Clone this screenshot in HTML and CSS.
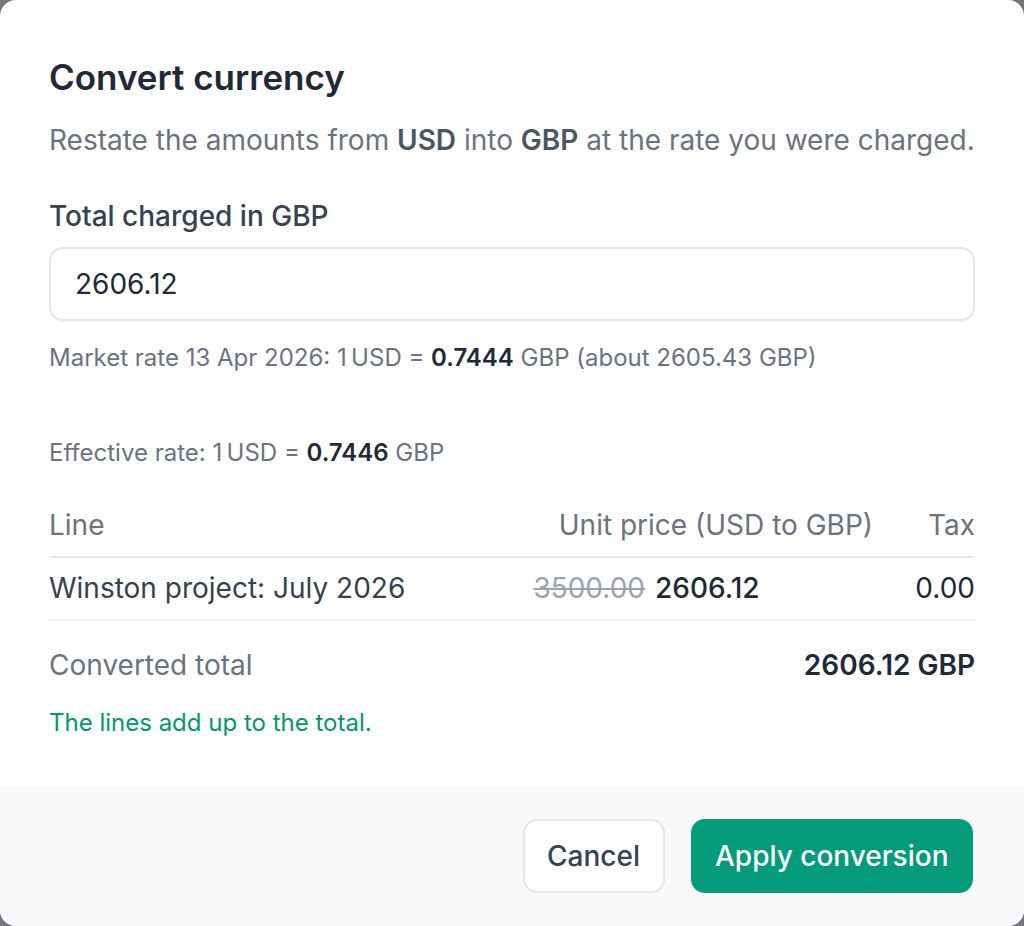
FILE: index.html
```html
<!DOCTYPE html>
<html lang="en">
<head>
<meta charset="utf-8">
<title>Convert currency</title>
<link rel="stylesheet" href="styles.css">
</head>
<body>
<div class="dialog" role="dialog" aria-labelledby="dlg-title">
  <div class="body">
    <h2 class="title" id="dlg-title">Convert currency</h2>
    <p class="desc">Restate the amounts from <strong>USD</strong> into <strong>GBP</strong> at the rate you were charged.</p>

    <label class="label" for="total">Total charged in GBP</label>
    <div class="input"><span class="input-text" id="total">2606.12</span></div>
    <p class="hint market">Market rate 13 Apr 2026: 1&#8201;USD = <strong>0.7444</strong> GBP (about 2605.43 GBP)</p>

    <p class="hint effective">Effective rate: 1&#8201;USD = <strong>0.7446</strong> GBP</p>

    <div class="table">
      <div class="tr th">
        <div class="c-line">Line</div>
        <div class="c-unit">Unit price (USD to GBP)</div>
        <div class="c-tax">Tax</div>
      </div>
      <div class="tr td">
        <div class="c-line">Winston project: July 2026</div>
        <div class="c-unit"><s class="old">3500.00</s><span class="new">2606.12</span></div>
        <div class="c-tax">0.00</div>
      </div>
    </div>

    <div class="total-row">
      <span class="total-label">Converted total</span>
      <span class="total-value">2606.12 GBP</span>
    </div>
    <p class="ok">The lines add up to the total.</p>
  </div>
  <div class="footer">
    <button class="btn btn-cancel" type="button">Cancel</button>
    <button class="btn btn-apply" type="button">Apply conversion</button>
  </div>
</div>
</body>
</html>
```
FILE: styles.css
```css
* { box-sizing: border-box; }
html, body {
  margin: 0;
  padding: 0;
  height: 100%;
}
body {
  background: #74777f;
  font-family: Inter, "Noto Sans", "Liberation Sans", sans-serif;
  color: #1f2937;
}
.dialog {
  height: 926px;
  width: 1024px;
  background: #ffffff;
  border-radius: 16px;
  overflow: hidden;
  display: flex;
  flex-direction: column;
}
.body {
  padding: 52.5px 49px 46px;
}
.title {
  margin: 0;
  font-size: 35px;
  line-height: 49px;
  font-weight: 600;
  color: #1f2937;
}
.desc {
  margin: 17px 0 0;
  font-size: 28px;
  line-height: 42px;
  color: #6b7280;
}
.desc strong {
  font-weight: 600;
  color: #4b5563;
}
.label {
  display: block;
  margin-top: 34px;
  font-size: 28px;
  line-height: 42px;
  font-weight: 500;
  color: #374151;
}
.input {
  margin-top: 10.5px;
  height: 73.5px;
  border: 2px solid #e5e7eb;
  border-radius: 14px;
  padding: 0 24px;
  display: flex;
  align-items: center;
  box-shadow: 0 1px 2px rgba(0,0,0,0.04);
}
.input-text {
  font-size: 28px;
  line-height: 42px;
  color: #1f2937;
}
.hint {
  margin: 0;
  font-size: 24px;
  line-height: 35px;
  color: #6b7280;
}
.hint strong {
  font-weight: 600;
  color: #1f2937;
}
.market { margin-top: 19.5px; }
.effective { margin-top: 60px; }
.table {
  margin-top: 34px;
}
.tr {
  display: grid;
  grid-template-columns: 1fr 340px 102px;
  font-size: 28px;
  line-height: 42px;
}
.th {
  color: #6b7280;
  padding-bottom: 9.5px;
  border-bottom: 2px solid #e5e7eb;
}
.td {
  color: #374151;
  padding: 9.5px 0 9.5px;
  border-bottom: 2px solid #f0f1f3;
}
.c-unit, .c-tax { text-align: right; }
.td .c-unit {
  display: flex;
  justify-content: flex-end;
  align-items: baseline;
}
.old {
  color: #9ca3af;
  margin-right: 10px;
}
.new {
  display: inline-block;
  width: 218px;
  text-align: left;
  color: #1f2937;
  font-weight: 500;
}
.td .c-tax { color: #1f2937; }
.total-row {
  margin-top: 23.4px;
  display: flex;
  justify-content: space-between;
  font-size: 28px;
  line-height: 42px;
}
.total-label { color: #6b7280; }
.total-value { color: #1f2937; font-weight: 600; }
.ok {
  margin: 19.5px 0 0;
  font-size: 24px;
  line-height: 35px;
  color: #059669;
}
.footer {
  flex: 1;
  background: #f8f9fb;
  display: flex;
  justify-content: flex-end;
  align-items: center;
  gap: 26px;
  padding: 0 51px 0 49px;
}
.btn {
  font-family: inherit;
  font-size: 28px;
  font-weight: 500;
  height: 74px;
  border-radius: 14px;
  padding: 0 22.5px;
  white-space: nowrap;
  cursor: pointer;
}
.btn-cancel {
  background: #ffffff;
  color: #374151;
  border: 2px solid #e5e7eb;
}
.btn-apply {
  background: #049b7b;
  color: #ffffff;
  border: 2px solid #049b7b;
}
```
